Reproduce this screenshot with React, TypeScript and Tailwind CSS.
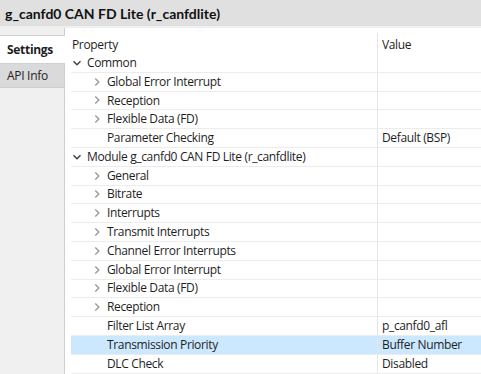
import React from "react";

type Row = { label: string; level: 0 | 1; icon: "open" | "closed" | "none"; value?: string; selected?: boolean };

const rows: Row[] = [
  { label: "Common", level: 0, icon: "open" },
  { label: "Global Error Interrupt", level: 1, icon: "closed" },
  { label: "Reception", level: 1, icon: "closed" },
  { label: "Flexible Data (FD)", level: 1, icon: "closed" },
  { label: "Parameter Checking", level: 1, icon: "none", value: "Default (BSP)" },
  { label: "Module g_canfd0 CAN FD Lite (r_canfdlite)", level: 0, icon: "open" },
  { label: "General", level: 1, icon: "closed" },
  { label: "Bitrate", level: 1, icon: "closed" },
  { label: "Interrupts", level: 1, icon: "closed" },
  { label: "Transmit Interrupts", level: 1, icon: "closed" },
  { label: "Channel Error Interrupts", level: 1, icon: "closed" },
  { label: "Global Error Interrupt", level: 1, icon: "closed" },
  { label: "Flexible Data (FD)", level: 1, icon: "closed" },
  { label: "Reception", level: 1, icon: "closed" },
  { label: "Filter List Array", level: 1, icon: "none", value: "p_canfd0_afl" },
  { label: "Transmission Priority", level: 1, icon: "none", value: "Buffer Number", selected: true },
  { label: "DLC Check", level: 1, icon: "none", value: "Disabled" },
];

function Chevron({ open }: { open: boolean }) {
  if (open) {
    return (
      <svg width="10" height="10" viewBox="0 0 10 10" className="shrink-0">
        <path d="M1.5 3.2 L5 6.7 L8.5 3.2" fill="none" stroke="#404040" strokeWidth="1.4" />
      </svg>
    );
  }
  return (
    <svg width="10" height="10" viewBox="0 0 10 10" className="shrink-0">
      <path d="M3.3 1.5 L6.8 5 L3.3 8.5" fill="none" stroke="#9a9a9a" strokeWidth="1.4" />
    </svg>
  );
}

export default function App() {
  return (
    <div
      className="w-[481px] h-[374px] overflow-hidden bg-white text-[#1e1e1e] flex flex-col"
      style={{ fontFamily: '"Open Sans", "Noto Sans", sans-serif' }}
    >
      <div className="h-[26px] bg-[#e0e0e0] flex items-center pl-[5px] shrink-0">
        <span
          className="text-[14px] font-bold text-[#111]"
          style={{ fontFamily: 'Lato, "Open Sans", sans-serif' }}
        >
          g_canfd0 CAN FD Lite (r_canfdlite)
        </span>
      </div>
      <div className="h-[2px] bg-[#efefef] shrink-0" />
      <div className="flex flex-1 min-h-0">
        <div className="w-[65px] bg-[#f0f0f0] flex flex-col shrink-0">
          <div className="h-[8px] border-r border-b border-[#cfcfcf]" />
          <div className="h-[27px] bg-white flex items-center pl-[7px] text-[12px] font-bold tracking-[-0.3px]">Settings</div>
          <div className="h-[25px] bg-[#dadada] border-r border-y border-[#cfcfcf] flex items-center pl-[7px] text-[12px] tracking-[-0.3px]">
            API Info
          </div>
          <div className="flex-1 border-r border-[#cfcfcf]" />
        </div>
        <div className="flex-1 pl-[6px] pt-[5px] text-[12px] tracking-[-0.35px]">
          <div className="flex h-[21px]">
            <div className="w-[306px] pl-[1px] pt-[3px] flex items-center">Property</div>
            <div className="flex-1 h-full border-l border-[#e6e6e6] pl-[4px] pt-[3px] flex items-center">Value</div>
          </div>
          {rows.map((r, i) => (
            <div
              key={i}
              className={`flex h-[18.8px] border-b border-[#ececec] ${r.selected ? "bg-[#cce8ff]" : ""}`}
            >
              <div className={`w-[306px] flex items-center ${r.level === 0 ? "pl-[1px]" : "pl-[21px]"}`}>
                {r.icon === "none" ? (
                  <span className="w-[12px] shrink-0" />
                ) : (
                  <span className="w-[12px] shrink-0 flex items-center">
                    <Chevron open={r.icon === "open"} />
                  </span>
                )}
                <span className="pl-[3px] whitespace-nowrap">{r.label}</span>
              </div>
              <div className="flex-1 border-l border-[#e6e6e6] pl-[4px] flex items-center whitespace-nowrap">
                {r.value ?? ""}
              </div>
            </div>
          ))}
        </div>
      </div>
    </div>
  );
}
